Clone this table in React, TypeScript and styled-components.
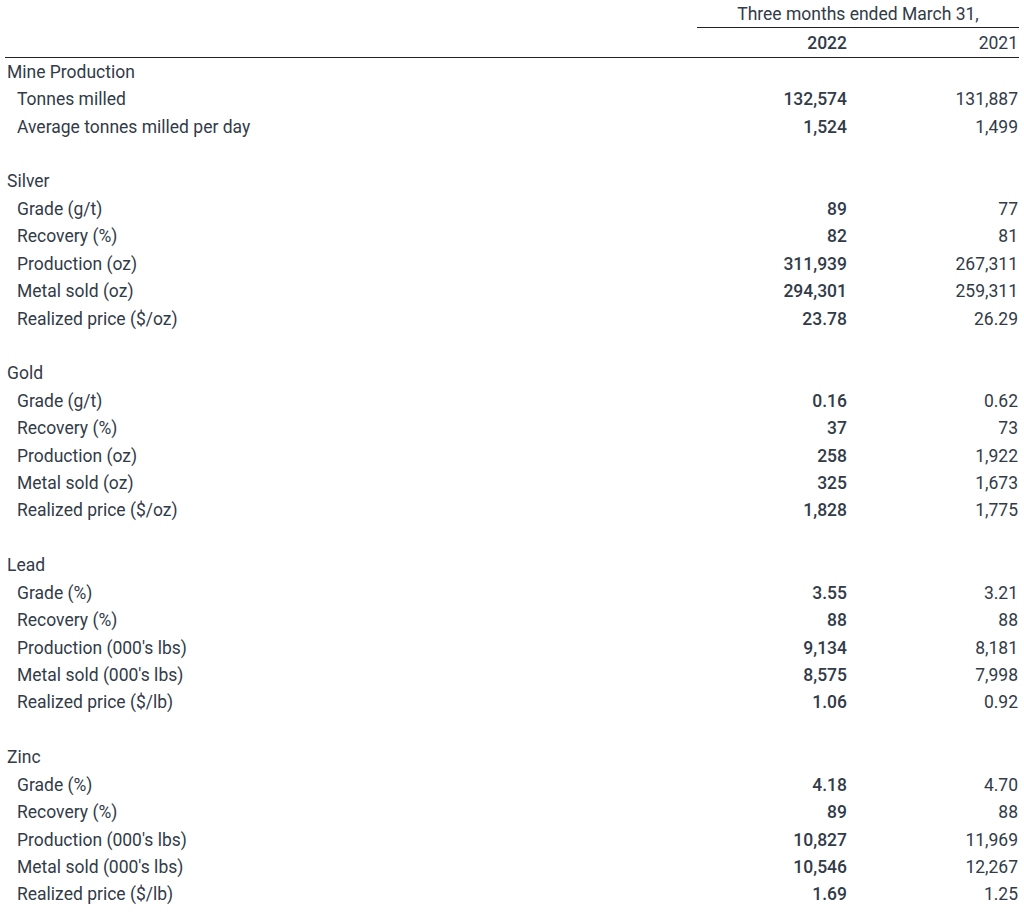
import React from "react";
import styled, { createGlobalStyle } from "styled-components";

const Global = createGlobalStyle`
  html, body { margin: 0; padding: 0; background: #fff; }
  body { font-family: Roboto, "Liberation Sans", sans-serif; color: #323b48; }
`;

const Wrap = styled.div`
  padding: 0 5px 0 5px;
`;

const Table = styled.div`
  display: grid;
  grid-template-columns: 1fr 161px 161px;
  width: 1014px;
  font-size: 17.5px;
`;

const Spanner = styled.div`
  grid-column: 2 / span 2;
  height: 27px;
  border-bottom: 1.5px solid #222;
  display: flex;
  align-items: center;
  justify-content: center;
`;

const HeadBlank = styled.div`
  height: 28px;
`;

const HeadCell = styled.div<{ $bold?: boolean; $first?: boolean }>`
  height: 29px;
  border-bottom: 1.5px solid #222;
  display: flex;
  align-items: center;
  justify-content: flex-end;
  font-weight: ${(p) => (p.$bold ? 500 : 400)};
  padding-right: ${(p) => (p.$first ? "11px" : "1px")};
`;

const Cell = styled.div<{ $indent?: boolean }>`
  height: 27.43px;
  display: flex;
  align-items: center;
  padding-left: ${(p) => (p.$indent ? "12px" : "2px")};
  white-space: nowrap;
`;

const Num = styled.div<{ $bold?: boolean; $first?: boolean }>`
  height: 27.43px;
  display: flex;
  align-items: center;
  justify-content: flex-end;
  font-weight: ${(p) => (p.$bold ? 500 : 400)};
  padding-right: ${(p) => (p.$first ? "11px" : "1px")};
`;

type Row = { label: string; a?: string; b?: string; indent?: boolean } | null;

const rows: Row[] = [
  { label: "Mine Production" },
  { label: "Tonnes milled", a: "132,574", b: "131,887", indent: true },
  { label: "Average tonnes milled per day", a: "1,524", b: "1,499", indent: true },
  null,
  { label: "Silver" },
  { label: "Grade (g/t)", a: "89", b: "77", indent: true },
  { label: "Recovery (%)", a: "82", b: "81", indent: true },
  { label: "Production (oz)", a: "311,939", b: "267,311", indent: true },
  { label: "Metal sold (oz)", a: "294,301", b: "259,311", indent: true },
  { label: "Realized price ($/oz)", a: "23.78", b: "26.29", indent: true },
  null,
  { label: "Gold" },
  { label: "Grade (g/t)", a: "0.16", b: "0.62", indent: true },
  { label: "Recovery (%)", a: "37", b: "73", indent: true },
  { label: "Production (oz)", a: "258", b: "1,922", indent: true },
  { label: "Metal sold (oz)", a: "325", b: "1,673", indent: true },
  { label: "Realized price ($/oz)", a: "1,828", b: "1,775", indent: true },
  null,
  { label: "Lead" },
  { label: "Grade (%)", a: "3.55", b: "3.21", indent: true },
  { label: "Recovery (%)", a: "88", b: "88", indent: true },
  { label: "Production (000's lbs)", a: "9,134", b: "8,181", indent: true },
  { label: "Metal sold (000's lbs)", a: "8,575", b: "7,998", indent: true },
  { label: "Realized price ($/lb)", a: "1.06", b: "0.92", indent: true },
  null,
  { label: "Zinc" },
  { label: "Grade (%)", a: "4.18", b: "4.70", indent: true },
  { label: "Recovery (%)", a: "89", b: "88", indent: true },
  { label: "Production (000's lbs)", a: "10,827", b: "11,969", indent: true },
  { label: "Metal sold (000's lbs)", a: "10,546", b: "12,267", indent: true },
  { label: "Realized price ($/lb)", a: "1.69", b: "1.25", indent: true },
];

export default function App() {
  return (
    <Wrap>
      <Global />
      <Table>
        <HeadBlank />
        <Spanner>Three months ended March 31,</Spanner>
        <HeadCell />
        <HeadCell $bold $first>2022</HeadCell>
        <HeadCell>2021</HeadCell>
        {rows.map((r, i) =>
          r ? (
            <React.Fragment key={i}>
              <Cell $indent={r.indent}>{r.label}</Cell>
              <Num $bold $first>{r.a ?? ""}</Num>
              <Num>{r.b ?? ""}</Num>
            </React.Fragment>
          ) : (
            <React.Fragment key={i}>
              <Cell />
              <Num />
              <Num />
            </React.Fragment>
          )
        )}
      </Table>
    </Wrap>
  );
}
